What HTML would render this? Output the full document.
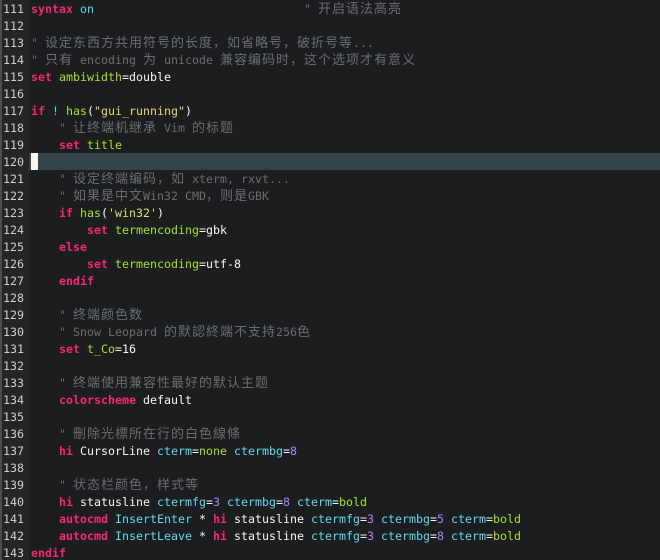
<!DOCTYPE html>
<html><head><meta charset="utf-8"><style>
html,body{margin:0;padding:0;background:#1b1d1e;width:660px;height:560px;overflow:hidden}
.w{position:relative;width:660px;height:560px;font-family:"DejaVu Sans Mono","Liberation Mono",monospace;font-size:11.63px;color:#f8f8f2}
.g{position:absolute;left:0;top:0;width:29px;height:560px;background:#232526}
.s{position:absolute;left:0;top:0;width:2px;height:560px;background:#4a4d50}
.l{position:absolute;left:0;height:17px;line-height:17px;white-space:pre;width:660px;overflow:hidden}
.n{position:absolute;left:3px;top:1px;color:#cfd0cf}
.t{position:absolute;left:31px;top:1px}
.c{color:#666e74}
.k{color:#f92672;font-weight:bold}
.y{color:#66d9ef}
.gr{color:#a6e22e}
.st{color:#e6db74}
.p{color:#ae81ff}
.j{font-family:"Noto Sans CJK SC","WenQuanYi Zen Hei",sans-serif;letter-spacing:1px;font-size:13px;line-height:1;vertical-align:baseline}
.cl{position:absolute;left:29px;top:153px;width:631px;height:17px;background:#35444a}
.cur{position:absolute;left:31px;top:153px;width:7px;height:17px;background:#f8f8f0}
</style></head><body><div class="w">
<div class="g"></div><div class="s"></div>
<div class="cl"></div><div class="cur"></div>
<div class="l" style="top:0"><span class="n">111</span><span class="t"><span class="k">syntax</span> <span class="y">on</span>                              <span class="c">" <span class="j">开启语法高亮</span></span></span></div>
<div class="l" style="top:17px"><span class="n">112</span></div>
<div class="l" style="top:34px"><span class="n">113</span><span class="t c">" <span class="j">设定东西方共用符号的长度，如省略号，破折号等</span>...</span></div>
<div class="l" style="top:51px"><span class="n">114</span><span class="t c">" <span class="j">只有</span> encoding <span class="j">为</span> unicode <span class="j">兼容编码时，这个选项才有意义</span></span></div>
<div class="l" style="top:68px"><span class="n">115</span><span class="t"><span class="k">set</span> <span class="gr">ambiwidth</span>=double</span></div>
<div class="l" style="top:85px"><span class="n">116</span></div>
<div class="l" style="top:102px"><span class="n">117</span><span class="t"><span class="k">if</span> <span class="y">!</span> <span class="gr">has</span>(<span class="st">"gui_running"</span>)</span></div>
<div class="l" style="top:119px"><span class="n">118</span><span class="t c">    " <span class="j">让终端机继承</span> Vim <span class="j">的标题</span></span></div>
<div class="l" style="top:136px"><span class="n">119</span><span class="t">    <span class="k">set</span> <span class="gr">title</span></span></div>
<div class="l" style="top:153px"><span class="n">120</span></div>
<div class="l" style="top:170px"><span class="n">121</span><span class="t c">    " <span class="j">设定终端编码，如</span> xterm, rxvt...</span></div>
<div class="l" style="top:187px"><span class="n">122</span><span class="t c">    " <span class="j">如果是中文</span>Win32 CMD<span class="j">，则是</span>GBK</span></div>
<div class="l" style="top:204px"><span class="n">123</span><span class="t">    <span class="k">if</span> <span class="gr">has</span>(<span class="st">'win32'</span>)</span></div>
<div class="l" style="top:221px"><span class="n">124</span><span class="t">        <span class="k">set</span> <span class="gr">termencoding</span>=gbk</span></div>
<div class="l" style="top:238px"><span class="n">125</span><span class="t">    <span class="k">else</span></span></div>
<div class="l" style="top:255px"><span class="n">126</span><span class="t">        <span class="k">set</span> <span class="gr">termencoding</span>=utf-8</span></div>
<div class="l" style="top:272px"><span class="n">127</span><span class="t">    <span class="k">endif</span></span></div>
<div class="l" style="top:289px"><span class="n">128</span></div>
<div class="l" style="top:306px"><span class="n">129</span><span class="t c">    " <span class="j">终端颜色数</span></span></div>
<div class="l" style="top:323px"><span class="n">130</span><span class="t c">    " Snow Leopard <span class="j">的默認終端不支持</span>256<span class="j">色</span></span></div>
<div class="l" style="top:340px"><span class="n">131</span><span class="t">    <span class="k">set</span> <span class="gr">t_Co</span>=16</span></div>
<div class="l" style="top:357px"><span class="n">132</span></div>
<div class="l" style="top:374px"><span class="n">133</span><span class="t c">    " <span class="j">终端使用兼容性最好的默认主题</span></span></div>
<div class="l" style="top:391px"><span class="n">134</span><span class="t">    <span class="k">colorscheme</span> default</span></div>
<div class="l" style="top:408px"><span class="n">135</span></div>
<div class="l" style="top:425px"><span class="n">136</span><span class="t c">    " <span class="j">刪除光標所在行的白色線條</span></span></div>
<div class="l" style="top:442px"><span class="n">137</span><span class="t">    <span class="k">hi</span> CursorLine <span class="y">cterm</span>=<span class="gr">none</span> <span class="y">ctermbg</span>=<span class="p">8</span></span></div>
<div class="l" style="top:459px"><span class="n">138</span></div>
<div class="l" style="top:476px"><span class="n">139</span><span class="t c">    " <span class="j">状态栏颜色，样式等</span></span></div>
<div class="l" style="top:493px"><span class="n">140</span><span class="t">    <span class="k">hi</span> statusline <span class="y">ctermfg</span>=<span class="p">3</span> <span class="y">ctermbg</span>=<span class="p">8</span> <span class="y">cterm</span>=<span class="gr">bold</span></span></div>
<div class="l" style="top:510px"><span class="n">141</span><span class="t">    <span class="k">autocmd</span> <span class="y">InsertEnter</span> * <span class="k">hi</span> statusline <span class="y">ctermfg</span>=<span class="p">3</span> <span class="y">ctermbg</span>=<span class="p">5</span> <span class="y">cterm</span>=<span class="gr">bold</span></span></div>
<div class="l" style="top:527px"><span class="n">142</span><span class="t">    <span class="k">autocmd</span> <span class="y">InsertLeave</span> * <span class="k">hi</span> statusline <span class="y">ctermfg</span>=<span class="p">3</span> <span class="y">ctermbg</span>=<span class="p">8</span> <span class="y">cterm</span>=<span class="gr">bold</span></span></div>
<div class="l" style="top:544px"><span class="n">143</span><span class="t"><span class="k">endif</span></span></div>
</div></body></html>
